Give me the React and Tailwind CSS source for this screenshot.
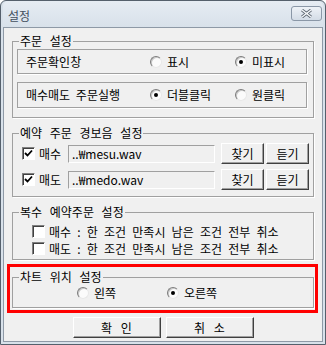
const Radio = ({ on }) => (
  <span className="w-[12px] h-[12px] shrink-0 rounded-full border border-t-[#7c7c7c] border-l-[#7c7c7c] border-b-[#e8e8e8] border-r-[#e8e8e8] bg-[#fbfbfb] shadow-[inset_1px_1px_0_#c8c8c8] flex items-center justify-center">
    {on && <span className="w-[4px] h-[4px] rounded-full bg-black" />}
  </span>
);

const Check = ({ on }) => (
  <span className="w-[13px] h-[13px] shrink-0 border border-t-[#808080] border-l-[#808080] border-b-white border-r-white bg-white shadow-[inset_1px_1px_0_#404040] flex items-center justify-center">
    {on && (
      <svg width="9" height="9" viewBox="0 0 9 9">
        <path d="M1 4 L3.5 6.5 L8 1.5" stroke="black" strokeWidth="1.8" fill="none" />
      </svg>
    )}
  </span>
);

const Btn = ({ children, className = "" }) => (
  <button
    className={
      "flex items-center justify-center bg-[#f0f0f0] border border-t-white border-l-white border-r-[#404040] border-b-[#404040] shadow-[inset_-1px_-1px_0_#a0a0a0] text-black " +
      className
    }
  >
    {children}
  </button>
);

const Group = ({ label, className = "", children }) => (
  <fieldset
    className={
      "ml-[8px] w-[302px] border border-[#a0a0a0] shadow-[1px_1px_0_white] " +
      className
    }
  >
    <legend className="ml-[6px] px-[1px] h-[14px] leading-[14px] [word-spacing:5px]">
      {label}
    </legend>
    {children}
  </fieldset>
);

const RadioOpt = ({ on, label }) => (
  <div className="flex items-center gap-[5px]">
    <Radio on={on} />
    <span>{label}</span>
  </div>
);

const Panel = ({ title, a, b, sel, className = "" }) => (
  <div
    className={
      "ml-[4px] w-[290px] flex items-center border border-[#a0a0a0] shadow-[1px_1px_0_white] " +
      className
    }
  >
    <span className="w-[132px] pl-[8px] [word-spacing:3px]">{title}</span>
    <div className="w-[85px]">
      <RadioOpt on={sel === 0} label={a} />
    </div>
    <RadioOpt on={sel === 1} label={b} />
  </div>
);

const SoundRow = ({ label, file, className = "" }) => (
  <div className={"flex items-center h-[21px] " + className}>
    <span className="ml-[9px]">
      <Check on />
    </span>
    <span className="ml-[4px] w-[29px]">{label}</span>
    <div className="w-[147px] h-[18px] flex items-center pl-[3px] bg-[#f0f0f0] border border-t-[#a0a0a0] border-l-[#a0a0a0] border-b-white border-r-white">
      {file}
    </div>
    <Btn className="ml-[6px] w-[43px] h-[21px]">찾기</Btn>
    <Btn className="ml-[2px] w-[43px] h-[21px]">듣기</Btn>
  </div>
);

const CancelRow = ({ label, className = "" }) => (
  <div className={"h-[15px] flex items-center " + className}>
    <span className="ml-[19px]">
      <Check />
    </span>
    <span className="ml-[4px] [word-spacing:3.5px]">
      {label} : 한 조건 만족시 남은 조건 전부 취소
    </span>
  </div>
);

export default function App() {
  return (
    <div className="w-[326px] h-[345px] bg-white text-[12px] leading-[14px] text-black font-['Noto_Sans_CJK_KR','Noto_Sans',sans-serif]">
      <div className="w-[326px] h-[345px] flex flex-col border border-[#55606c] rounded-t-[6px] bg-[#d8e1ea] px-[2px] pb-[2px]">
        {/* title bar */}
        <div className="h-[26px] flex items-start justify-between bg-gradient-to-b from-[#e6ecf3] to-[#d8e1ea] rounded-t-[5px]">
          <span className="pl-[5px] pt-[8px] text-[#43505e]">설정</span>
          <div className="mt-[5px] mr-[1px] w-[31px] h-[15px] rounded-[3px] border border-[#8a97a7] bg-gradient-to-b from-[#eef2f7] to-[#d3dce6] flex items-center justify-center">
            <svg width="13" height="9" viewBox="0 0 13 9">
              <path
                d="M2 1 L6.5 4.5 L11 1 M2 8 L6.5 4.5 L11 8"
                stroke="#5c6670"
                strokeWidth="3"
                fill="none"
              />
              <path
                d="M2 1 L6.5 4.5 L11 1 M2 8 L6.5 4.5 L11 8"
                stroke="#f4f6f8"
                strokeWidth="1.4"
                fill="none"
              />
            </svg>
          </div>
        </div>

        {/* client */}
        <div className="flex-1 flex flex-col border border-[#8e99a6] bg-[#f0f0f0]">
          <Group label="주문 설정" className="mt-[6px] pb-[9px]">
            <Panel
              title="주문확인창"
              a="표시"
              b="미표시"
              sel={1}
              className="mt-[1px] h-[25px]"
            />
            <Panel
              title="매수매도 주문실행"
              a="더블클릭"
              b="원클릭"
              sel={0}
              className="mt-[8px] h-[26px]"
            />
          </Group>

          <Group label="예약 주문 경보음 설정" className="mt-[8px] pb-[6px]">
            <SoundRow label="매수" file="..₩mesu.wav" className="mt-[3px]" />
            <SoundRow label="매도" file="..₩medo.wav" className="mt-[5px]" />
          </Group>

          <Group label="복수 예약주문 설정" className="mt-[8px] pb-[3px]">
            <CancelRow label="매수" className="mt-[5px]" />
            <CancelRow label="매도" className="mt-[2px]" />
          </Group>

          <div className="relative mt-[10px] ml-[8px] w-[302px]">
            <fieldset className="w-[302px] border border-[#a0a0a0] shadow-[1px_1px_0_white] pb-[7px]">
              <legend className="ml-[6px] px-[1px] h-[14px] leading-[14px] [word-spacing:5px]">
                차트 위치 설정
              </legend>
              <div className="mt-[2px] h-[14px] flex items-center">
                <div className="ml-[64px] w-[90px]">
                  <RadioOpt label="왼쪽" />
                </div>
                <RadioOpt on label="오른쪽" />
              </div>
            </fieldset>
            {/* red highlight box */}
            <div className="absolute top-[-6px] left-[-5px] right-[-4px] bottom-[-5px] border-[3px] border-[#ff0000] pointer-events-none" />
          </div>

          <div className="mt-[9px] flex justify-center gap-[5px]">
            <Btn className="w-[88px] h-[21px] [word-spacing:6px]">확 인</Btn>
            <Btn className="w-[88px] h-[21px] [word-spacing:6px]">취 소</Btn>
          </div>
        </div>
      </div>
    </div>
  );
}
